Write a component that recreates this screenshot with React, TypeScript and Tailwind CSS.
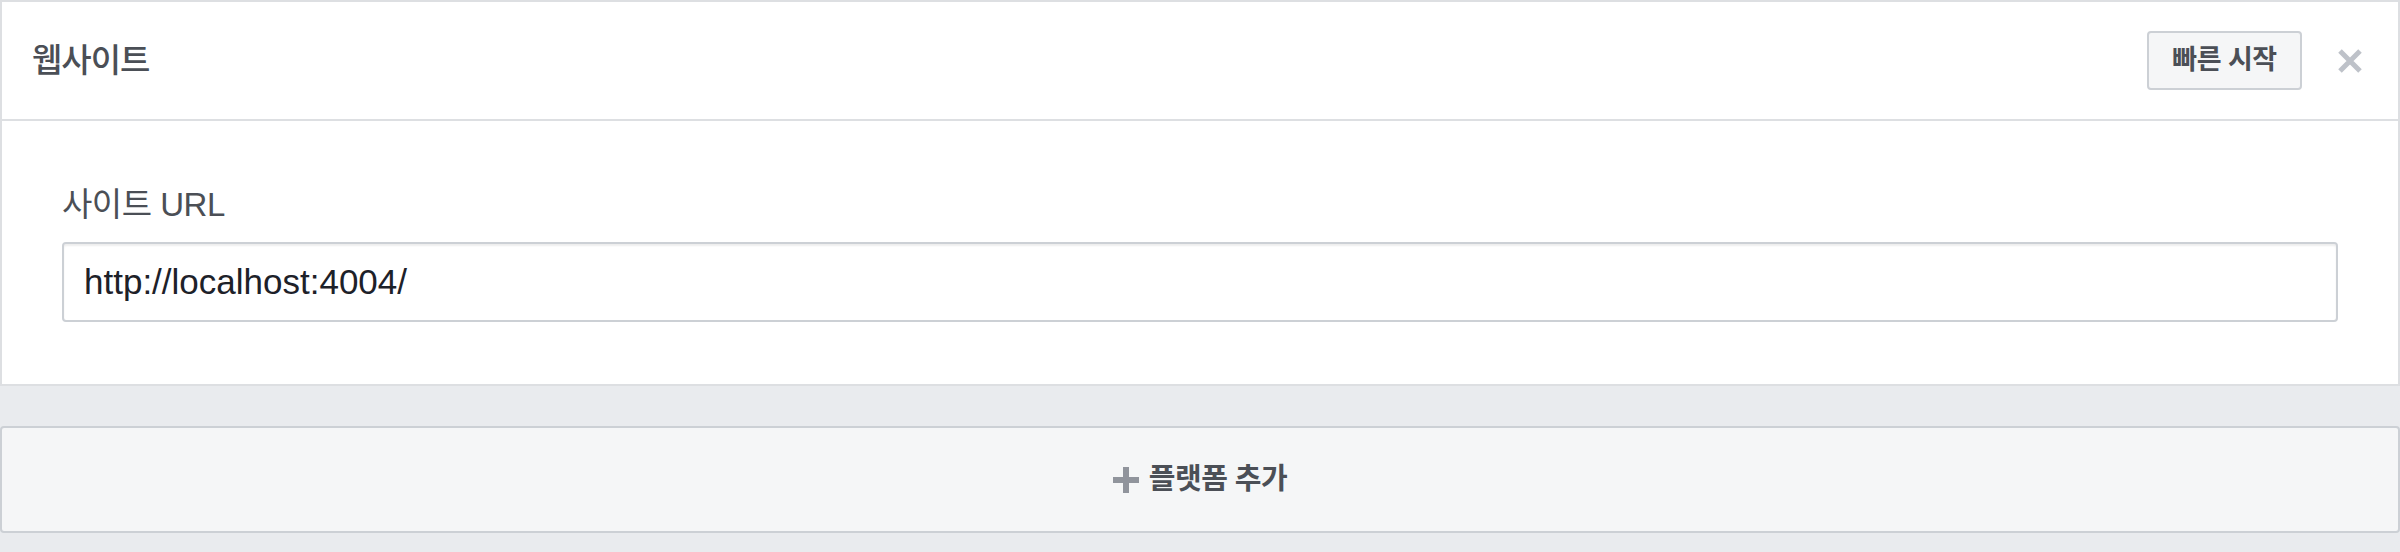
import React from "react";

const font = { fontFamily: '"Liberation Sans", Arial, "Noto Sans CJK KR", sans-serif' };

function CloseIcon() {
  return (
    <svg width="26" height="24" viewBox="0 0 26 24" fill="none">
      <path d="M3 2l20 20M23 2L3 22" stroke="#bec2c9" strokeWidth="5" strokeLinecap="butt" />
    </svg>
  );
}

function PlusIcon() {
  return (
    <svg width="26" height="26" viewBox="0 0 26 26" fill="none">
      <path d="M13 0v26M0 13h26" stroke="#90949c" strokeWidth="6" />
    </svg>
  );
}

export default function App() {
  return (
    <div className="w-[2400px] h-[552px] bg-[#e9ebee]" style={font}>
      {/* Website card */}
      <div className="bg-white border-2 border-[#dddfe2] h-[386px]">
        <div className="h-[119px] flex items-center justify-between pl-[30px] pr-[35px] border-b-2 border-[#dddfe2]">
          <h2 className="text-[33px] font-medium text-[#4b4f56] tracking-[-1px]">웹사이트</h2>
          <div className="flex items-center gap-[35px]">
            <button className="w-[155px] h-[59px] bg-[#f5f6f7] border-2 border-[#ccd0d5] rounded-[4px] text-[27px] font-bold text-[#4b4f56] tracking-[-0.5px]">
              빠른 시작
            </button>
            <CloseIcon />
          </div>
        </div>
        <div className="px-[60px] pt-[65px]">
          <label className="block text-[33px] leading-[37px] text-[#4b4f56] tracking-[-0.5px]">사이트 URL</label>
          <div className="mt-[19px] h-[80px] border-2 border-[#ccd0d5] rounded-[4px] shadow-[inset_0_2px_2px_rgba(0,0,0,0.07)] flex items-center pl-[20px]">
            <span className="text-[35px] text-[#1d2129]">http://localhost:4004/</span>
          </div>
        </div>
      </div>

      {/* Add platform */}
      <div className="mt-[40px] h-[107px] bg-[#f5f6f7] border-2 border-[#ccd0d5] rounded-[4px] flex items-center justify-center gap-[10px]">
        <PlusIcon />
        <span className="text-[29px] font-bold text-[#4b4f56] tracking-[-0.5px]">플랫폼 추가</span>
      </div>
    </div>
  );
}
